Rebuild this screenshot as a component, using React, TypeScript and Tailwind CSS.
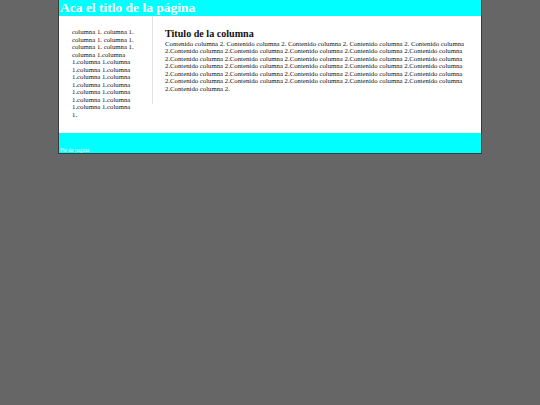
import React from "react";

export default function App() {
  const left =
    "columna 1. ".repeat(6) + "columna 1.".repeat(16);
  const right =
    "Contenido columna 2. ".repeat(4) + "Contenido columna 2.".repeat(27);
  return (
    <div
      className="min-h-[405px] w-full bg-[#666666]"
      style={{ fontFamily: '"Liberation Serif", "Times New Roman", serif' }}
    >
      <div className="mx-auto w-[424px] border-x border-b border-[#3a3a3a] bg-white">
        <h1 className="m-0 h-[16px] bg-[#00ffff] pl-[1px] text-[13.5px] font-bold leading-[15.5px] text-white">
          Aca el titlo de la página
        </h1>
        <div className="flex items-start">
          <div className="w-[93px] shrink-0 pl-[13px] pr-[15px] pt-[12px] pb-[15px] text-[6.75px] leading-[7.5px] text-[#111]">
            {left}
          </div>
          <div className="flex-1 border-l border-[#e2e2e2] pl-[12px] pr-[14px] pt-[12px] pb-[12px] text-[#111]">
            <h2 className="m-0 text-[10.1px] font-bold leading-[11.5px]">
              Titulo de la columna
            </h2>
            <div className="text-[6.75px] leading-[7.5px]">{right}</div>
          </div>
        </div>
        <div className="flex h-[20px] items-end bg-[#00ffff] pl-[1px] text-[5.4px] leading-[6px] text-[#e8ffff]">
          Pie de pagina
        </div>
      </div>
    </div>
  );
}
